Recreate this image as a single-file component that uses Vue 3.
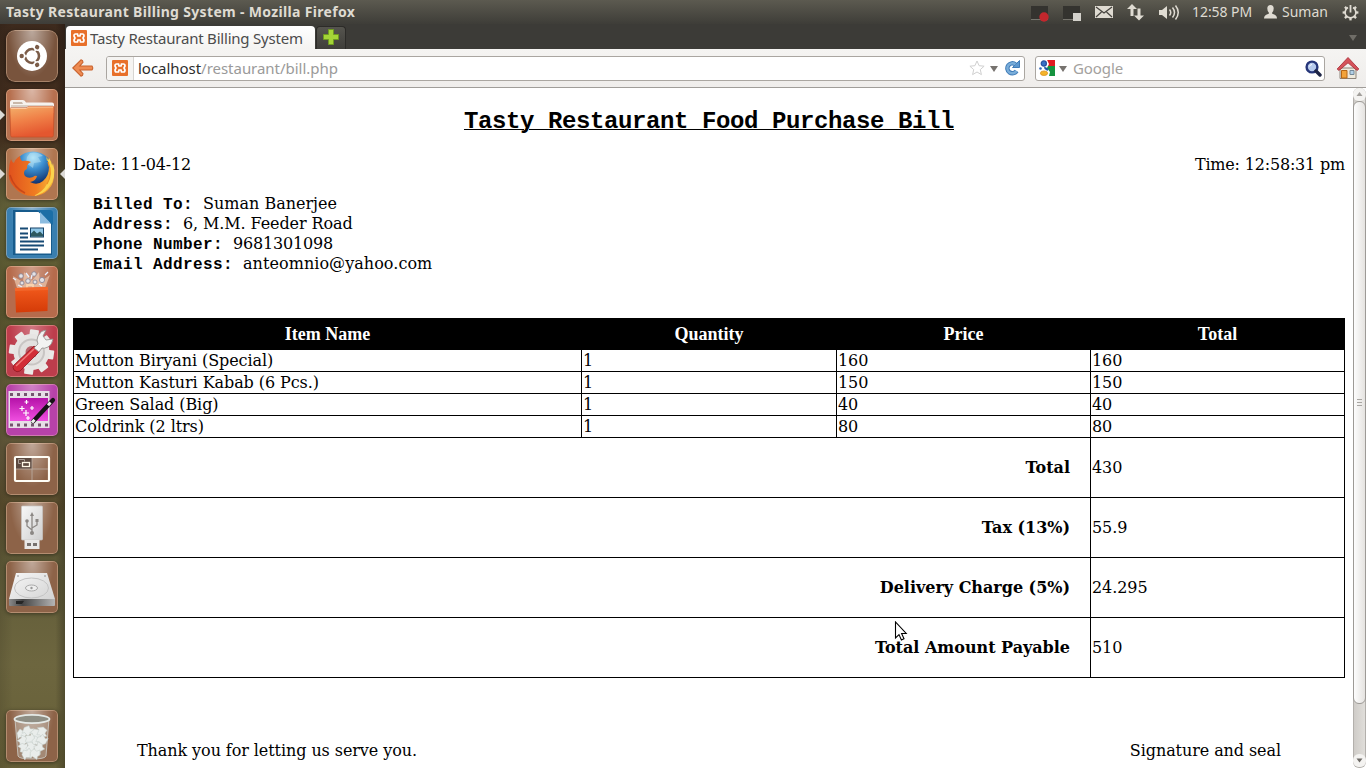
<script setup>
const columns = ['Item Name', 'Quantity', 'Price', 'Total']
const items = [
  ['Mutton Biryani (Special)', '1', '160', '160'],
  ['Mutton Kasturi Kabab (6 Pcs.)', '1', '150', '150'],
  ['Green Salad (Big)', '1', '40', '40'],
  ['Coldrink (2 ltrs)', '1', '80', '80'],
]
const totals = [
  ['Total', '430'],
  ['Tax (13%)', '55.9'],
  ['Delivery Charge (5%)', '24.295'],
  ['Total Amount Payable', '510'],
]
const customer = [
  ['Billed To:', 'Suman Banerjee'],
  ['Address:', '6, M.M. Feeder Road', 'snug'],
  ['Phone Number:', '9681301098', 'tight'],
  ['Email Address:', 'anteomnio@yahoo.com', 'loose'],
]
const launchers = ['dash', 'files', 'firefox', 'writer', 'store', 'settings', 'video', 'spaces', 'usb', 'disk', 'trash']
const teeth = [0, 45, 90, 135, 180, 225, 270, 315]
const paper = [[16, 24], [22, 21], [30, 24], [36, 22], [17, 31], [24, 29], [31, 31], [36, 30], [18, 38], [25, 37], [33, 38], [21, 44], [29, 44]]
const perforations = [4, 11, 18, 25, 32, 39]
</script>

<template>
  <div class="screen">
    <header class="panel">
      <span class="window-title">Tasty Restaurant Billing System - Mozilla Firefox</span>
      <div class="tray">
        <svg class="rec" width="20" height="18" viewBox="0 0 20 18">
          <rect x="1" y="1" width="17" height="13" fill="#34332f" /><path d="M1 14.500h17" stroke="#77756e" />
          <circle cx="14" cy="12" r="4.700" fill="#c2272d" />
        </svg>
        <svg class="rec2" width="20" height="18" viewBox="0 0 20 18">
          <rect x="1" y="1" width="17" height="13" fill="#34332f" /><path d="M1 14.500h17" stroke="#77756e" />
          <rect x="11" y="8" width="8" height="8" fill="#d3d1cb" />
        </svg>
        <svg class="mail" width="18" height="12" viewBox="0 0 18 12">
          <rect width="18" height="12" fill="#dfdbd2" />
          <path d="M1 1l8 6 8-6M1 11l5.500-5M17 11l-5.500-5" fill="none" stroke="#45433e" stroke-width="1.200" />
        </svg>
        <svg class="net" width="17" height="17" viewBox="0 0 17 17">
          <path d="M5 0l5 5H6.500v7H3.500V5H0zM12 16.500l-5-5h3.500v-7h3v7H17z" fill="#dfdbd2" />
        </svg>
        <svg class="sound" width="21" height="17" viewBox="0 0 21 17">
          <path d="M0 6h3l5-4v13l-5-4H0z" fill="#dfdbd2" />
          <path d="M10.500 5.500q2.500 3 0 6M13.500 3.500q4 5 0 10M16.500 1.500q5.500 7 0 14" fill="none" stroke="#dfdbd2" stroke-width="1.500" />
        </svg>
        <span class="clock">12:58 PM</span>
        <svg class="person" width="13" height="14" viewBox="0 0 13 14">
          <path d="M6.500 0q3.200 0 3.200 3.500 0 2.500-1.500 4v1.200q4.800 1 4.800 4.800H0q0-3.800 4.800-4.800V7.500q-1.500-1.500-1.500-4Q3.300 0 6.500 0z" fill="#dfdbd2" />
        </svg>
        <span class="user">Suman</span>
        <svg class="power" width="17" height="17" viewBox="0 0 17 17">
          <g stroke="#dfdbd2" stroke-width="2.300"><path v-for="a in teeth.slice(1)" :key="a" d="M8.500 .6v2.800" :transform="`rotate(${a} 8.500 8.500)`" /></g>
          <path d="M6 3.600a5.400 5.400 0 1 0 5 0" fill="none" stroke="#dfdbd2" stroke-width="1.700" />
          <path d="M8.500 1v7.500" stroke="#dfdbd2" stroke-width="1.800" />
        </svg>
      </div>
    </header>

    <div class="desktop">
      <nav class="launcher">
        <div v-for="name in launchers" :key="name" class="tile" :class="name">
          <i v-if="name === 'files' || name === 'firefox'" class="run" />
          <i v-if="name === 'firefox'" class="focus" />
          <svg width="52" height="52" viewBox="0 0 52 52">
            <g v-if="name === 'dash'">
              <circle cx="26" cy="26" r="15" fill="#fff" />
              <circle cx="26" cy="26" r="7" fill="none" stroke="#7b5c48" stroke-width="2.600" />
              <g v-for="a in [60, 180, 300]" :key="a" :transform="`rotate(${a} 26 26)`">
                <path d="M30 26h5" stroke="#fff" stroke-width="1.500" /><circle cx="36" cy="26" r="3.500" fill="#fff" /><circle cx="36.300" cy="26" r="2.200" fill="#7b5c48" />
              </g>
            </g>
            <g v-else-if="name === 'files'">
              <path d="M4 13q0-2 2-2h11q2 0 3 2.500h26q2 0 2 2V24H4z" fill="#f6f2ef" />
              <path d="M7 13h9l1 2H7z" fill="#c9b8aa" /><path d="M5 16h42v3H5z" fill="#d9cec5" />
              <path d="M3.800 20q0-1 1-1H20l3-1.500h24q1 0 1 1l-.6 28q0 1.500-1.500 1.500H6Q4.700 48 4.700 46.500z" fill="url(#folder)" stroke="#c65128" stroke-width=".8" />
              <path d="M4.500 19.500H20l3-1.500h24" fill="none" stroke="#ffc79b" />
            </g>
            <g v-else-if="name === 'firefox'">
              <circle cx="27" cy="24" r="20.500" fill="url(#globe)" />
              <path d="M24 5q8-2 13 3l-5 1 3 5-7 1-1 5-7-5 1-6z" fill="#c5ebf8" opacity=".45" />
              <path d="M5 11q1 3 3 4 1-4 6-7 0 3 2 5 5-1 9 1-3 1-4 4 1 3-2 4-2 3 0 6 3 3 8 1 2-2 4-1-1 5-7 6 7 4 13-1 6-5 6-14 0-6-3-10 7 6 8 15 1 11-6 18-6 6-15 6-12 0-19-9Q1 32 3 21q0-5 2-10z" fill="url(#fox)" />
              <path d="M39 6q2 3 2 7 2-1 2-3 3 4 3 8l1-3q4 14-4 24-6 8-16 9 10-4 14-12 5-10 2-19-1-6-4-11z" fill="#fbd24c" />
              <path d="M42 14q5 12-1 22" fill="none" stroke="#f08f22" stroke-width="1.300" />
              <path d="M4 27q4 13 15 18" fill="none" stroke="#b83716" stroke-width="1.500" opacity=".6" />
            </g>
            <g v-else-if="name === 'writer'">
              <path d="M7 3h28l11 12v33H7z" fill="#175b8c" />
              <path d="M9.500 5h23L45 17v29.500H9.500z" fill="#fff" /><path d="M31 3h13q3 0 3 3v12z" fill="#1b6ea6" /><path d="M34 5v11.500h11z" fill="#8bbce0" />
              <path d="M14 21.500h8M14 26.500h8M14 30.500h8M14 34.500h24M14 38.500h24M14 42.500h18" stroke="#174a75" stroke-width="2" />
              <rect x="24.500" y="21" width="13" height="9" fill="#90c7e7" stroke="#18456a" /><path d="M25 29.500v-3l3-3 3 3 3-2 3 3v2z" fill="#2e5960" />
            </g>
            <g v-else-if="name === 'store'">
              <path d="M11 22L7 10l10 6 1-10 8 9 7-9 1 10 10-7-5 13z" fill="#ffe7d0" opacity=".5" />
              <g fill="#e4e2e5" stroke="#8d8795" stroke-width=".9"><circle cx="15" cy="10" r="2.300" /><circle cx="22" cy="15" r="2.300" /><circle cx="28" cy="8" r="2.300" /><circle cx="36" cy="14" r="2.600" /><circle cx="16" cy="17" r="2" /><circle cx="29" cy="16" r="2" /></g>
              <path d="M20 7l3 4M39 9l3-3M10 14l-3-2M25 13l1-4M33 18l3 2M12 19l4 2" stroke="#e8f0ff" stroke-width="1.300" />
              <path d="M21 23v-4h6v4" fill="none" stroke="#f8d3ae" stroke-width="1.800" />
              <path d="M9 22l33-1-.5 24L10 46.500z" fill="url(#bag)" /><path d="M9 22l33-1v3L9 25z" fill="#f2672c" />
            </g>
            <g v-else-if="name === 'settings'">
              <g fill="#eae9e7"><rect v-for="a in teeth" :key="a" x="21" y="4.500" width="9" height="10" rx="1" :transform="`rotate(${a + 8} 25.500 27)`" /></g>
              <circle cx="25.500" cy="27" r="18" fill="#e7e5e3" /><circle cx="25.500" cy="27" r="13.500" fill="#c8c5c3" /><circle cx="25.500" cy="27" r="11.500" fill="#e2e0de" /><circle cx="25.500" cy="27" r="6" fill="#b9626a" />
              <path d="M8 40l20-19 6 5-20 20q-3 2-6-1-2-3 0-5z" fill="#d22d36" stroke="#8f1620" stroke-width=".8" /><path d="M10 41l18-17" stroke="#f17a78" stroke-width="1.500" />
              <path d="M32 19q-2-4 0-8 3-6 8-6l-3 6 3 4 7-1q-1 6-5 8-4 2-6 1l-3 4-5-4z" fill="#f3f3f2" stroke="#8f8b89" stroke-width=".8" />
            </g>
            <g v-else-if="name === 'video'">
              <rect x="2.500" y="7" width="41" height="37" fill="#e6dfe6" />
              <rect x="4" y="14" width="38" height="23" fill="url(#film)" />
              <g fill="#74566e"><rect v-for="x in perforations" :key="'t' + x" :x="x" y="9" width="3" height="3" /><rect v-for="x in perforations" :key="'b' + x" :x="x" y="39.500" width="3" height="3" /></g>
              <path d="M16 22v5M13.500 24.500h5M20.500 16v4M18.500 18h4M20 26v6M17 29h6M26 22v4M24 24h4M22 32v4M20 34h4" stroke="#fff" stroke-width="1.200" />
              <path d="M27 37.500L47 16" stroke="#161217" stroke-width="4.200" stroke-linecap="round" /><path d="M26 38.500l2.500-2.700M42 21.300l2.500-2.700" stroke="#eee" stroke-width="3" />
            </g>
            <g v-else-if="name === 'spaces'">
              <rect x="9" y="14" width="34" height="24" fill="none" stroke="#fffdf5" stroke-width="2.200" rx="1" />
              <rect x="10" y="15" width="16" height="11" fill="#5d4a40" /><path d="M26 15v22M10 26h32" stroke="#bdaea5" stroke-width=".8" />
              <path d="M15 20.500h-2.500v-4h6v2" fill="none" stroke="#a99e97" /><rect x="16.500" y="19.500" width="7" height="4" fill="none" stroke="#fff8e7" stroke-width="1.300" />
            </g>
            <g v-else-if="name === 'usb'">
              <rect x="15.500" y="4" width="21" height="34" rx="1" fill="url(#metal)" stroke="#c8c5c3" stroke-width=".7" />
              <rect x="18.500" y="38" width="15" height="9" fill="#e9e8e6" /><path d="M21 41h4v3h-4zM27 41h4v3h-4z" fill="#77716d" />
              <path d="M26 31V13M26 28l-5-4v-4M26 26l5-3v-4" fill="none" stroke="#8b8784" stroke-width="1.300" /><path d="M26 10l2 4h-4z" fill="#8b8784" /><circle cx="26" cy="31" r="2" fill="#8b8784" /><circle cx="21" cy="19" r="1.800" fill="#8b8784" /><rect x="29.500" y="17" width="3" height="3" fill="#8b8784" />
            </g>
            <g v-else-if="name === 'disk'">
              <path d="M10 12h31l8 26v6H3v-6z" fill="url(#metal)" /><path d="M3 38h46v6q0 1-1 1H4q-1 0-1-1z" fill="url(#edge)" />
              <ellipse cx="25.500" cy="27" rx="17" ry="10" fill="none" stroke="#c4c4c4" /><ellipse cx="25.500" cy="27" rx="6" ry="3" fill="#eee" stroke="#aaa" /><circle cx="25.500" cy="27" r="1.200" fill="#999" />
              <path d="M10 40h8l-2 3h-6z" fill="#252525" /><circle cx="12" cy="15" r=".8" fill="#888" /><circle cx="39" cy="15" r=".8" fill="#888" />
            </g>
            <g v-else>
              <path d="M9 9l3 37q1 3 14 3t14-3l3-37z" fill="#d8dedb" opacity=".3" /><path d="M9 9l3 37q1 3 14 3t14-3l3-37" fill="none" stroke="#d5dcd8" stroke-width="1" opacity=".7" />
              <g fill="#e9edeb" stroke="#c3ccc8" stroke-width=".5"><path v-for="(p, i) in paper" :key="i" d="M-5-1L-2-5 1-3 4-5 5 0 3 2 3 5-2 3-4 5z" :transform="`translate(${p[0]} ${p[1]}) rotate(${i * 31})`" /></g>
              <ellipse cx="26" cy="9" rx="17.500" ry="4.200" fill="#8e8e84" stroke="#e4e9e6" stroke-width="1.800" />
            </g>
          </svg>
        </div>
      </nav>

      <main class="browser">
        <div class="tabs">
          <div class="tab">
            <svg class="xampp" width="16" height="16" viewBox="0 0 16 16"><rect width="16" height="16" rx="1" fill="#e8702a" /><path d="M4.500 4h2L7 6h2l.5-2h2Q13 4 13 6l-1 2 1 2q0 2-1.500 2h-2L9 10H7l-.5 2h-2Q3 12 3 10l1-2-1-2q0-2 1.500-2z" fill="none" stroke="#fff" stroke-width="1.700" /></svg>
            <span>Tasty Restaurant Billing System</span>
          </div>
          <div class="newtab"><svg width="16" height="16" viewBox="0 0 16 16"><path d="M5.500.5h5v5h5v5h-5v5h-5v-5h-5v-5h5z" fill="#a4d437" stroke="#6f9a20" /></svg></div>
          <svg class="alltabs" width="8" height="6" viewBox="0 0 8 6"><path d="M0 0h8L4 6z" fill="#6f6d67" /></svg>
        </div>
        <div class="toolbar">
          <svg class="back" width="22" height="18" viewBox="0 0 22 18"><path d="M.8 9L9 .8q2 .6 2 2.500L7.800 7H20q1.500 2 0 4H7.800l3.200 3.700q0 2-2 2.500z" fill="#ee8b52" stroke="#c9622d" stroke-width="1.100" /></svg>
          <div class="urlbar">
            <div class="identity">
              <svg width="16" height="16" viewBox="0 0 16 16"><rect width="16" height="16" rx="1" fill="#e8702a" /><path d="M4.500 4h2L7 6h2l.5-2h2Q13 4 13 6l-1 2 1 2q0 2-1.500 2h-2L9 10H7l-.5 2h-2Q3 12 3 10l1-2-1-2q0-2 1.500-2z" fill="none" stroke="#fff" stroke-width="1.700" /></svg>
            </div>
            <span class="url"><b>localhost</b>/restaurant/bill.php</span>
            <svg class="star" width="16" height="16" viewBox="0 0 16 16"><path d="M8 1l2.100 4.700 5 .5-3.800 3.400 1.100 5L8 12l-4.400 2.600 1.100-5L.9 6.200l5-.5z" fill="#fff" stroke="#d0d0d0" /></svg>
            <svg class="drop" width="8" height="6" viewBox="0 0 8 6"><path d="M0 0h8L4 6z" fill="#77736f" /></svg>
            <svg class="reload" width="16" height="16" viewBox="0 0 16 16"><path d="M11.500 4.400A5 5 0 1 0 12.600 11" fill="none" stroke="#407cb8" stroke-width="4.400" /><path d="M8.500 7.500h7v-7z" fill="#5d97ce" stroke="#407cb8" /><path d="M11.500 4.400A5 5 0 1 0 12.600 11" fill="none" stroke="#79add9" stroke-width="2.400" /></svg>
          </div>
          <div class="search">
            <svg width="16" height="16" viewBox="0 0 16 16"><path d="M8 0h8v6H9z" fill="#e11b22" /><path d="M8 6h8v10H9L7 12z" fill="#15933f" /><path d="M0 0h8l2 4-2 4 3 4-1 4H0z" fill="#fff" /><circle cx="4.800" cy="3.500" r="2.600" fill="#3970c6" stroke="#244fa1" stroke-width="1.200" /><circle cx="1.500" cy="8.500" r="1.300" fill="#3166b8" /><path d="M5 6.500l4.500 2L8.500 11l-3-2z" fill="#1f56a8" /><ellipse cx="5" cy="13.200" rx="3.600" ry="2.300" fill="#f4b42a" stroke="#d88c18" stroke-width=".7" /></svg>
            <svg class="drop" width="8" height="6" viewBox="0 0 8 6"><path d="M0 0h8L4 6z" fill="#77736f" /></svg>
            <span>Google</span>
            <svg class="glass" width="17" height="17" viewBox="0 0 17 17"><circle cx="7" cy="7" r="5.400" fill="#b7cbed" stroke="#26367a" stroke-width="2.400" /><path d="M11 11l4 4" stroke="#1e2546" stroke-width="3.400" stroke-linecap="round" /><path d="M4.500 6.500q.5-2 2.500-2" stroke="#fff" fill="none" /></svg>
          </div>
          <svg class="home" width="24" height="24" viewBox="0 0 24 24"><path d="M4 12h16v10.500H4z" fill="#eee9dc" stroke="#8d8378" /><path d="M5.500 14.500h5.500V22H5.500z" fill="#f3a33a" stroke="#b76613" /><path d="M14 14.500h4v4h-4z" fill="#b2d0e6" stroke="#748898" /><path d="M1.200 13L12 1.500 22.800 13q-1 2-2.800.7L12 6.800 4 13.700q-1.800 1.300-2.800-.7z" fill="#d5525a" stroke="#ac323b" stroke-width=".9" /></svg>
        </div>

        <div class="viewport">
          <div class="page">
            <h2>Tasty Restaurant Food Purchase Bill</h2>
            <div class="meta"><span>Date: 11-04-12</span><span>Time: 12:58:31 pm</span></div>
            <div class="customer">
              <p v-for="c in customer" :key="c[0]"><b>{{ c[0] }}</b><span :class="c[2]">{{ c[1] }}</span></p>
            </div>
            <div class="bill">
              <div v-for="c in columns" :key="c" class="head">{{ c }}</div>
              <template v-for="(row, r) in items" :key="r"><div v-for="(v, i) in row" :key="i" class="cell">{{ v }}</div></template>
              <template v-for="t in totals" :key="t[0]"><div class="cell label">{{ t[0] }}</div><div class="cell">{{ t[1] }}</div></template>
            </div>
            <div class="foot"><span>Thank you for letting us serve you.</span><span>Signature and seal</span></div>
          </div>
          <div class="scrollbar">
            <svg width="13" height="13" viewBox="0 0 13 13"><path d="M3.500 8h6l-3-4z" fill="#a29f9b" /></svg>
            <div class="thumb"><i /><i /><i /></div>
            <svg class="down" width="13" height="13" viewBox="0 0 13 13"><path d="M3.500 4.500h6l-3 4z" fill="#6d6a66" /></svg>
          </div>
        </div>
      </main>
    </div>

    <svg class="pointer" width="14" height="21" viewBox="0 0 14 21"><path d="M1.500 1v16l3.500-3.400 2.400 5.400 2.600-1.200-2.400-5.300h4.600z" fill="#fff" stroke="#000" stroke-width="1.100" /></svg>

    <svg class="defs" width="0" height="0">
      <defs>
        <linearGradient id="folder" x2="0.300" y2="1"><stop stop-color="#f3b06b" /><stop offset=".5" stop-color="#f08148" /><stop offset="1" stop-color="#e4572f" /></linearGradient>
        <radialGradient id="globe" cx=".5" cy=".15" r=".8"><stop stop-color="#a8e1f7" /><stop offset=".35" stop-color="#3c8fd0" /><stop offset=".8" stop-color="#10316f" /></radialGradient>
        <linearGradient id="fox"><stop stop-color="#e0511d" /><stop offset=".6" stop-color="#f07d22" /><stop offset="1" stop-color="#f9bd3a" /></linearGradient>
        <linearGradient id="bag" x2="0" y2="1"><stop stop-color="#f25a1c" /><stop offset="1" stop-color="#d43b08" /></linearGradient>
        <linearGradient id="film" x2="0" y2="1"><stop stop-color="#b512a8" /><stop offset="1" stop-color="#f04fe0" /></linearGradient>
        <linearGradient id="metal" x2="1" y2="1"><stop stop-color="#f7f7f7" /><stop offset="1" stop-color="#cfcfcf" /></linearGradient>
        <linearGradient id="edge"><stop stop-color="#8a8a8a" /><stop offset=".3" stop-color="#464646" /><stop offset="1" stop-color="#b5b5b5" /></linearGradient>
      </defs>
    </svg>
  </div>
</template>

<style scoped>
* { box-sizing: border-box; }
.screen { position: relative; width: 1366px; height: 768px; overflow: hidden; font-family: "Noto Sans", sans-serif; background: #fff; display: flex; flex-direction: column; }
svg { display: block; flex: none; }
.defs { position: absolute; }
.panel { height: 24px; flex: none; display: flex; align-items: center; justify-content: space-between; background: linear-gradient(#5c5a50, #3e3d38); color: #dfdbd2; padding: 0 7px 0 6px; }
.window-title { font-weight: 700; font-size: 14px; letter-spacing: .33px; line-height: 24px; white-space: nowrap; }
.tray { display: flex; align-items: center; height: 24px; font-size: 14px; line-height: 24px; }
.rec { margin-top: 3px; margin-right: 12px; }
.rec2 { margin-top: 3px; margin-right: 13px; }
.mail { margin-right: 14px; }
.net { margin-right: 15px; }
.sound { margin-right: 12px; }
.clock { width: 72px; letter-spacing: -.07px; }
.person { margin-right: 5px; }
.user { width: 60px; }
.desktop { flex: 1; display: flex; min-height: 0; }
.launcher { width: 65px; flex: none; display: flex; flex-direction: column; gap: 7px; padding: 6px 0 6px 6px; background: linear-gradient(90deg, rgba(0,0,0,.1), rgba(0,0,0,0) 20% 85%, rgba(0,0,0,.25)), linear-gradient(#3d2a1d 0, #46301f 110px, #5d5735 160px, #69683c 190px, #5c5830 290px, #655d3a 380px, #63583a 430px, #5b4e2e 480px, #615c39 540px, #6d663f 640px, #676038 744px); }
.tile { position: relative; width: 52px; height: 52px; border-radius: 5px; background: radial-gradient(ellipse at 50% 0, rgba(255,255,255,.45), rgba(255,255,255,0) 60%), #8d6348; box-shadow: inset 0 0 0 1px rgba(255,220,190,.35), 0 1px 4px rgba(0,0,0,.45); }
.dash { background: radial-gradient(ellipse at 50% 0, rgba(255,255,255,.5), rgba(255,255,255,0) 65%), #79543d; border-radius: 9px; }
.files { background: radial-gradient(ellipse at 50% 0, rgba(255,255,255,.5), rgba(255,255,255,0) 60%), #b7704f; }
.firefox { background: radial-gradient(ellipse at 50% 0, rgba(255,255,255,.4), rgba(255,255,255,0) 60%), #b07650; }
.writer { background: radial-gradient(ellipse at 50% 0, rgba(255,255,255,.4), rgba(255,255,255,0) 60%), #397fb0; }
.store { background: radial-gradient(ellipse at 50% 0, rgba(255,255,255,.35), rgba(255,255,255,0) 60%), #b66b4c; }
.settings { background: radial-gradient(ellipse at 50% 0, rgba(255,255,255,.3), rgba(255,255,255,0) 60%), #bd3d4c; }
.video { background: radial-gradient(ellipse at 50% 0, rgba(255,255,255,.35), rgba(255,255,255,0) 60%), #b742a9; }
.trash { margin-top: auto; }
.run, .focus { position: absolute; top: 21px; border: 5px solid transparent; width: 0; height: 0; }
.run { left: -6px; border-left-color: #dcdad6; border-right: 0; }
.focus { right: -7px; border-right-color: #dcdad6; border-left: 0; }
.browser { flex: 1; display: flex; flex-direction: column; min-width: 0; }
.tabs { height: 25px; flex: none; display: flex; background: #3c3b37; padding: 2px 9px 0 1px; }
.tab { width: 249px; height: 23px; display: flex; align-items: center; padding-left: 5px; gap: 3px; border-radius: 4px 4px 0 0; background: linear-gradient(#fff, #f4f3f1); color: #4c4c4c; font-size: 15px; letter-spacing: -.21px; white-space: nowrap; line-height: 22px; }
.newtab { width: 30px; height: 23px; margin-left: 1px; background: linear-gradient(#55544e, #3f3e3a); border: 1px solid #2c2b28; border-bottom: 0; border-radius: 4px 4px 0 0; display: flex; justify-content: center; padding-top: 2px; }
.alltabs { margin-left: auto; margin-top: 9px; }
.toolbar { height: 39px; flex: none; display: flex; align-items: center; padding: 0 6px 0 7px; background: linear-gradient(#f5f4f2, #efedeb); border-bottom: 1px solid #a09d99; }
.urlbar, .search { height: 25px; display: flex; align-items: center; background: #fff; border: 1px solid #aaa6a1; border-radius: 3px; font-size: 15px; line-height: 23px; }
.urlbar { width: 919px; margin-left: 12px; padding-right: 4px; }
.identity { width: 27px; height: 23px; display: grid; place-items: center; border-right: 1px solid #d7d5d2; background: #f5f4f2; border-radius: 2px 0 0 2px; }
.url { margin-left: 4px; color: #9a9a9a; white-space: nowrap; letter-spacing: -.03px; }
.url b { font-weight: 400; color: #2e2e2e; }
.star { margin-left: auto; }
.urlbar .drop { margin: 2px 6px 0 5px; }
.search { width: 290px; margin-left: 10px; padding: 0 2px 0 3px; }
.search .drop { margin: 2px 6px 0 4px; }
.search span { color: #a3a19e; letter-spacing: -.1px; }
.glass { margin-left: auto; }
.home { margin-left: 11px; }
.viewport { flex: 1; display: flex; min-height: 0; }
.page { flex: 1; padding: 20px 8px 0; overflow: hidden; color: #000; font: 16px/20px "DejaVu Serif", serif; }
h2 { margin: 0; text-align: center; font: bold 24px/27px "Liberation Mono", monospace; letter-spacing: -.402px; text-decoration: underline; text-decoration-thickness: 1px; text-underline-offset: 1px; }
.meta { display: flex; justify-content: space-between; margin-top: 20px; letter-spacing: -.19px; }
.customer { padding: 19px 0 0 20px; }
.customer p { margin: 0; height: 20px; white-space: nowrap; }
.customer b { font: bold 16px/20px "Liberation Mono", monospace; letter-spacing: .4px; margin-right: 10px; }
.tight { letter-spacing: -.18px; }
.snug { letter-spacing: -.1px; }
.loose { letter-spacing: .05px; }
.bill { display: grid; grid-template-columns: 508px 255px 254px 254px; grid-template-rows: 31px repeat(4, 22px) repeat(4, 60px); border: solid #000; border-width: 1px 0 0 1px; margin-top: 44px; }
.head { background: #000; color: #fff; text-align: center; padding-right: 1px; font: bold 18px/31px "Liberation Serif", serif; }
.cell { border: solid #000; border-width: 0 1px 1px 0; padding-left: 1px; display: flex; align-items: center; letter-spacing: -.08px; }
.label { grid-column: span 3; justify-content: flex-end; padding-right: 20px; font-weight: 700; letter-spacing: -.02px; }
.foot { display: flex; justify-content: space-between; padding: 63px 64px 0; letter-spacing: -.08px; }
.scrollbar { width: 13px; flex: none; display: flex; flex-direction: column; background: linear-gradient(90deg, #cfccc8, #e0deda); border: 1px solid #b3b0ac; border-top: 0; border-radius: 6px; }
.scrollbar svg { margin-left: -1px; background: #f4f3f1; border-radius: 6px; }
.thumb { height: 603px; margin: 0 -1px; border: 1px solid #9d9a96; border-radius: 6px; background: linear-gradient(90deg, #fdfdfd, #e5e3e0); display: flex; flex-direction: column; align-items: center; justify-content: center; gap: 2px; }
.thumb i { width: 5px; height: 1px; background: #a9a6a2; }
.down { margin-top: auto; }
.pointer { position: absolute; left: 894px; top: 621px; }
</style>
